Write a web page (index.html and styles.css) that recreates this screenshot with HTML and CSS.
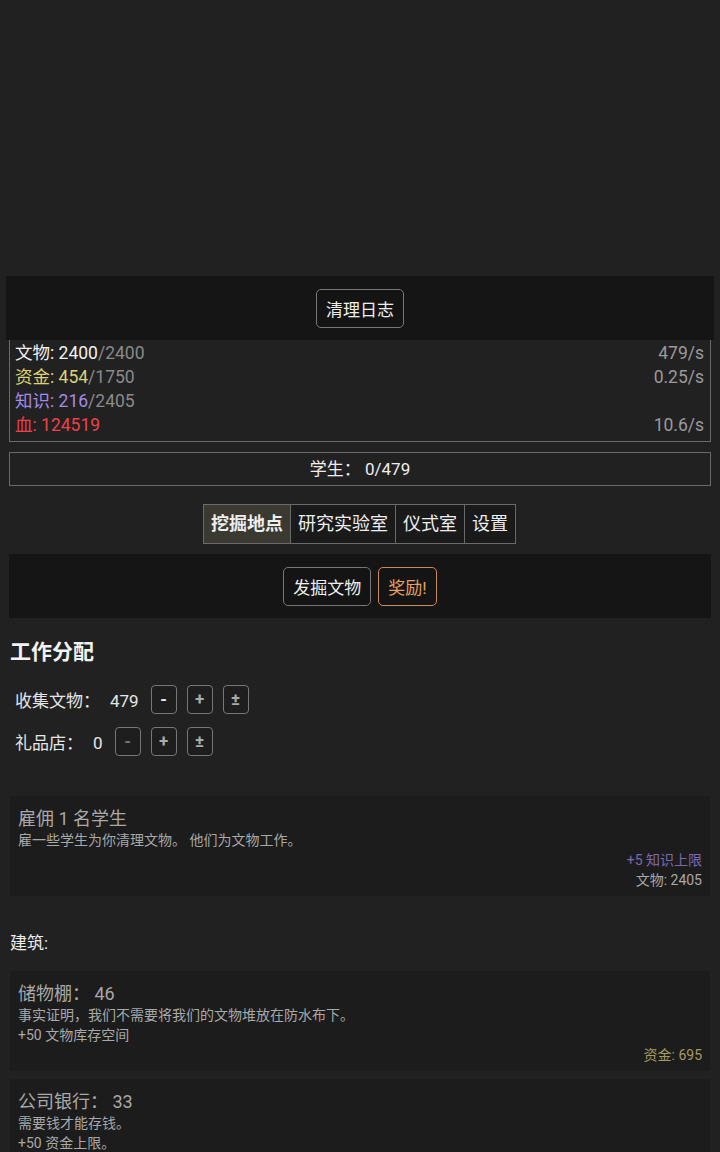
FILE: index.html
```html
<!DOCTYPE html>
<html>
<head>
  <meta charset="utf-8">
  <title>挖掘地点</title>
  <link rel="stylesheet" href="styles.css">
</head>
<body>
  <div class="top-space"></div>

  <!-- 日志 -->
  <div class="log-panel">
    <button class="btn">清理日志</button>
  </div>

  <!-- 资源 -->
  <div class="resources">
    <div class="res-row">
      <span><span class="c-artifact">文物: 2400</span><span class="max">/2400</span></span>
      <span class="rate">479/s</span>
    </div>
    <div class="res-row">
      <span><span class="c-money">资金: 454</span><span class="max">/1750</span></span>
      <span class="rate">0.25/s</span>
    </div>
    <div class="res-row">
      <span><span class="c-know">知识: 216</span><span class="max">/2405</span></span>
      <span class="rate"></span>
    </div>
    <div class="res-row">
      <span class="c-blood">血: 124519</span>
      <span class="rate">10.6/s</span>
    </div>
  </div>

  <div class="students">学生： 0/479</div>

  <div class="tabs">
    <div class="tab active">挖掘地点</div>
    <div class="tab">研究实验室</div>
    <div class="tab">仪式室</div>
    <div class="tab">设置</div>
  </div>

  <div class="action-panel">
    <button class="btn">发掘文物</button>
    <button class="btn btn-reward">奖励!</button>
  </div>

  <h2 class="section-title">工作分配</h2>

  <div class="jobs">
    <div class="job-row">
      <span class="job-name">收集文物：<span class="job-count">479</span></span>
      <button class="small-btn strong">-</button>
      <button class="small-btn">+</button>
      <button class="small-btn">±</button>
    </div>
    <div class="job-row">
      <span class="job-name">礼品店：<span class="job-count">0</span></span>
      <button class="small-btn dim">-</button>
      <button class="small-btn">+</button>
      <button class="small-btn">±</button>
    </div>
  </div>

  <div class="card card-hire">
    <div class="card-title">雇佣 1 名学生</div>
    <div class="card-desc">雇一些学生为你清理文物。 他们为文物工作。</div>
    <div class="card-cost c-know-dim">+5 知识上限</div>
    <div class="card-cost">文物: 2405</div>
  </div>

  <div class="subheading">建筑:</div>

  <div class="card">
    <div class="card-title">储物棚： 46</div>
    <div class="card-desc">事实证明，我们不需要将我们的文物堆放在防水布下。</div>
    <div class="card-desc">+50 文物库存空间</div>
    <div class="card-cost c-money-dim">资金: 695</div>
  </div>

  <div class="card">
    <div class="card-title">公司银行： 33</div>
    <div class="card-desc">需要钱才能存钱。</div>
    <div class="card-desc">+50 资金上限。</div>
    <div class="card-cost c-money-dim">资金: 1200</div>
  </div>
</body>
</html>
```

FILE: styles.css
```css
/* 暗色主题 */
body {
  margin: 0;
  padding: 0;
  background-color: #212121;
  color: #e6e6e6;
  font-family: Roboto, "Noto Sans CJK SC", sans-serif;
  font-size: 17px;
}

.top-space {
  height: 276px;
}

.btn {
  font-family: Roboto, "Noto Sans CJK SC", sans-serif;
  font-size: 17px;
  color: #eee;
  background-color: #141414;
  border: 1px solid #777;
  border-radius: 5px;
  padding: 0 9px;
  height: 39px;
}

.btn-reward {
  color: #e8a060;
  border-color: #c88a5a;
}

.log-panel {
  margin: 0 6px;
  height: 64px;
  background-color: #151515;
  display: flex;
  align-items: center;
  justify-content: center;
}

.resources {
  margin: 0 9px;
  border: 1px solid #6a6a6a;
  border-top: none;
  padding: 1px 6px 4px 5px;
  font-size: 17.5px;
}

.res-row {
  display: flex;
  justify-content: space-between;
  height: 24px;
  line-height: 24px;
}

.c-artifact { color: #f2f2f2; }
.c-money { color: #ddd276; }
.c-know { color: #a58ae8; }
.c-blood { color: #f0404a; }
.max { color: #8a8a8a; }
.rate { color: #9a9a9a; }

.c-know-dim { color: #7a68b0; }
.c-money-dim { color: #a49a62; }

.students {
  margin: 10px 9px 0;
  height: 32px;
  line-height: 32px;
  border: 1px solid #6a6a6a;
  text-align: center;
  color: #eee;
}

.tabs {
  margin-top: 18px;
  display: flex;
  justify-content: center;
}

.tab {
  height: 38px;
  line-height: 38px;
  padding: 0 7px;
  border: 1px solid #6a6a6a;
  margin-left: -1px;
  background-color: #1a1a1a;
  color: #eee;
  font-size: 18px;
}

.tab.active {
  background-color: #3b3a32;
  font-weight: bold;
}

.action-panel {
  margin: 10px 9px 0;
  height: 64px;
  background-color: #151515;
  display: flex;
  align-items: center;
  justify-content: center;
  gap: 7px;
}

.section-title {
  margin: 20px 10px 0;
  font-size: 21px;
  line-height: 28px;
  color: #f2f2f2;
}

.jobs {
  margin: 12px 15px 0;
}

.job-row {
  display: flex;
  align-items: center;
  height: 42px;
}

.job-name {
  margin-right: 12px;
  color: #e6e6e6;
}

.job-count {
  margin-left: 10px;
}

.small-btn {
  width: 26px;
  height: 29px;
  margin-right: 10px;
  padding: 0;
  background-color: #1e1e1e;
  border: 1px solid #777;
  border-radius: 4px;
  color: #aaa;
  font-family: Roboto, sans-serif;
  font-size: 17px;
  font-weight: bold;
}

.small-btn.strong {
  color: #eee;
}

.small-btn.dim {
  color: #777;
}

.card {
  margin: 0 10px 8px;
  padding: 12px 8px 6px;
  background-color: #1c1c1c;
  color: #a8a8a8;
}

.card-hire {
  margin-top: 34px;
}

.card-title {
  font-size: 18px;
  line-height: 22px;
}

.card-desc {
  font-size: 14px;
  line-height: 20px;
}

.card-cost {
  font-size: 14px;
  line-height: 20px;
  text-align: right;
}

.subheading {
  margin: 35px 10px 16px;
  font-size: 17px;
  line-height: 24px;
  color: #eee;
}
```
